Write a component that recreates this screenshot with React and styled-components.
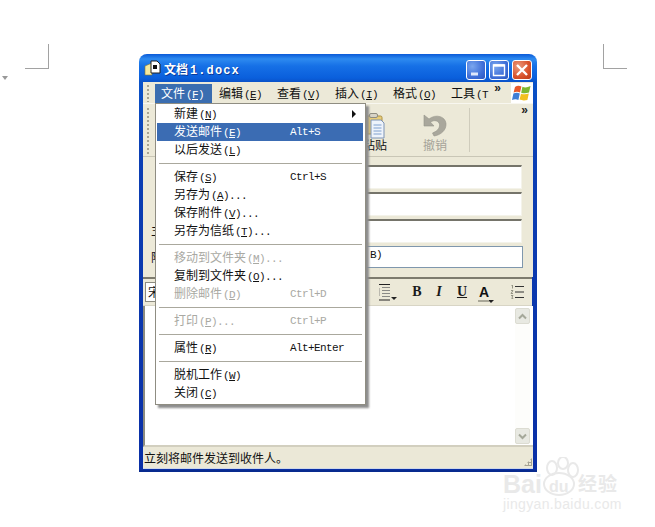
import React from "react";
import styled, { createGlobalStyle } from "styled-components";

const Global = createGlobalStyle`
  html, body { margin: 0; padding: 0; background: #fff; }
  body { font-family: "Noto Sans CJK SC", "Liberation Sans", sans-serif; font-size: 12px; color: #111; }
`;
const Page = styled.div`
  position: relative; width: 655px; height: 527px; overflow: hidden; padding: 54px 0 0 139px; box-sizing: border-box;
`;
const CropMark = styled.div`
  position: absolute; width: 23px; height: 24px; top: 44px; left: ${p => p.$left}px;
  border-bottom: 1px solid #a2a2a2;
  ${p => p.$side === "right" ? "border-right: 1px solid #a2a2a2;" : "border-left: 1px solid #a2a2a2;"}
`;
const PageMark = styled.div`
  position: absolute; left: 2px; top: 76px; width: 0; height: 0;
  border-left: 3px solid transparent; border-right: 3px solid transparent; border-top: 4px solid #999;
`;
const Window = styled.div`
  position: relative; width: 398px; height: 418px; box-sizing: border-box; padding: 0 4px 3px;
  display: flex; flex-direction: column; border-radius: 8px 8px 0 0;
  background: linear-gradient(180deg, #0a5ad8 0, #2d8af0 5px, #1670e6 12px, #0a5fdc 24px, #0a52c8 28px, #0b3fb4 100px, #0a2fa6 100%);
  box-shadow: inset 0 -2px 0 #082a8e;
`;
const TitleBar = styled.div`
  height: 28px; flex: none; display: flex; align-items: center; margin: 0 -1px; padding: 0 2px 0 2px;
`;
const TitleText = styled.span`
  margin-left: 2px; margin-top: 1px; color: #fff; font-size: 12px; font-weight: 700; text-shadow: 1px 1px 0 #0a3a9a;
`;
const TitleLatin = styled.span`
  font-family: "Liberation Mono", monospace; font-size: 12px; letter-spacing: 1.1px; margin-left: 2px;
`;
const WinButtons = styled.div`
  margin-left: auto; display: flex; gap: 3px; margin-top: 4px;
`;
const WinButton = styled.div`
  width: 20px; height: 20px; border: 1px solid #fff; border-radius: 3px; box-sizing: border-box;
  display: flex; align-items: center; justify-content: center;
  background: ${p => p.$close
    ? "radial-gradient(circle at 30% 30%, #ea9a7e, #d9512a 60%, #b83a18)"
    : "radial-gradient(circle at 30% 30%, #7aa6ee, #3f6fd8 60%, #2a55c0)"};
`;
const MenuBar = styled.div`
  height: 21px; flex: none; display: flex; align-items: flex-end; background: #ece9d8; position: relative;
  padding-left: 12px;
`;
const Gripper = styled.div`
  position: absolute; left: 4px; top: ${p => p.$top}px; bottom: ${p => p.$bottom}px; width: 2px;
  background: repeating-linear-gradient(180deg, #a7a493 0 2px, transparent 2px 4px);
`;
const MenuTitle = styled.div`
  width: ${p => p.$w || 58}px; margin-left: ${p => p.$ml || 0}px; height: 19px; box-sizing: border-box; padding-left: 6px; flex: none; white-space: nowrap;
  line-height: 18px; font-size: 12px;
  background: ${p => p.$active ? "#3a6db0" : "transparent"};
  color: ${p => p.$active ? "#fff" : "#111"};
`;
const Key = styled.span`
  font-family: "Liberation Mono", monospace; font-size: 11px; letter-spacing: -.6px; margin-left: 1px;
  u { text-underline-offset: 1px; }
`;
const Chevrons = styled.span`
  font-family: "Liberation Sans", sans-serif; font-weight: 700; font-size: 12px; line-height: 12px; color: #222;
  position: absolute; right: ${p => p.$right}px; top: ${p => p.$top}px;
`;
const Flag = styled.div`
  position: absolute; right: 0; top: 1px; width: 22px; height: 20px; background: #fff;
  display: flex; align-items: center; justify-content: center;
`;
const Toolbar = styled.div`
  height: 54px; flex: none; box-sizing: border-box; position: relative; display: flex;
  background: #ece9d8; border-top: 1px solid #f8f7f0; border-bottom: 1px solid #c9c6b6;
  padding-left: 202px;
`;
const ToolButton = styled.div`
  width: 60px; display: flex; flex-direction: column; align-items: center; padding-top: 9px; box-sizing: border-box;
  color: ${p => p.$disabled ? "#a5a398" : "#111"}; font-size: 12px;
`;
const ToolIcon = styled.div`
  height: 26px;
`;
const ToolLabel = styled.div`
  line-height: 14px; margin-top: -1px;
`;
const VSep = styled.div`
  width: 1px; margin: ${p => p.$m || "4px 0"}; background: #cfccbc; margin-left: ${p => p.$ml || 0}px; flex: none;
`;
const Fields = styled.div`
  height: 120px; flex: none; box-sizing: border-box; background: #ece9d8; padding: 8px 10px 0 8px;
  display: flex; flex-direction: column;
`;
const FieldRow = styled.div`
  display: flex; align-items: stretch; height: ${p => p.$h}px; margin-bottom: ${p => p.$mb}px; margin-right: ${p => p.$mr || 0}px;
`;
const FieldLabel = styled.div`
  width: 4px; flex: none; font-size: 12px; line-height: 22px; color: #111; margin-right: 4px; white-space: nowrap;
`;
const Sunken = styled.div`
  flex: 1; background: #fff; border-top: 2px solid #75746a; border-right: 1px solid #f4f3ea; border-bottom: 1px solid #f4f3ea;
`;
const Attach = styled.div`
  flex: 1; background: #fff; border: 1px solid #7f97ad; box-sizing: border-box; padding-left: 210px;
  font-family: "Liberation Mono", monospace; font-size: 11px; letter-spacing: -.6px; line-height: 16px;
`;
const FormatBar = styled.div`
  height: 29px; flex: none; box-sizing: border-box; background: #ece9d8; display: flex; align-items: center;
  border-top: 2px solid #7d7b6e; border-bottom: 1px solid #d8d5c5; padding-left: 2px; margin-right: 1px;
`;
const Combo = styled.div`
  width: 60px; height: 20px; background: #fff; border: 1px solid #8d8c80; box-sizing: border-box; font-size: 12px; line-height: 18px; padding-left: 2px; flex: none;
`;
const FormatGroup = styled.div`
  margin-left: 170px; display: flex; align-items: center; height: 100%;
`;
const FormatGlyph = styled.span`
  width: ${p => p.$w}px; flex: none; text-align: center; font-family: "Liberation Serif", serif; font-weight: 700;
  font-style: ${p => p.$italic ? "italic" : "normal"}; font-size: 14px; color: #1a1a1a; line-height: 16px;
  text-decoration: ${p => p.$underline ? "underline" : "none"};
`;
const FontColor = styled.span`
  position: relative; width: 14px; flex: none; text-align: center; font-family: "Liberation Sans", sans-serif; font-weight: 700; font-size: 14px; line-height: 14px;
  &::after { content: ""; position: absolute; left: 1px; bottom: -3px; width: 11px; height: 2px; background: #a9a798; }
`;
const Caret = styled.i`
  position: absolute; right: ${p => p.$r}px; bottom: ${p => p.$b}px; width: 0; height: 0;
  border-left: 3px solid transparent; border-right: 3px solid transparent; border-top: 3px solid #222;
`;
const IconSlot = styled.div`
  position: relative; width: ${p => p.$w}px; flex: none; display: flex; align-items: center; justify-content: center;
`;
const Body = styled.div`
  flex: 1; min-height: 0; background: #fff; display: flex; justify-content: flex-end;
  border-left: 2px solid #8c8b80; border-bottom: 2px solid #d2cfbf; padding: 2px 3px 1px 0; box-sizing: border-box;
`;
const Scroll = styled.div`
  width: 15px; display: flex; flex-direction: column; justify-content: space-between; background: #fdfdfb;
`;
const ScrollBtn = styled.div`
  width: 15px; height: 16px; box-sizing: border-box; border: 1px solid #dcdcd2; border-radius: 2px; background: #e8e9e2;
  display: flex; align-items: center; justify-content: center;
`;
const Status = styled.div`
  height: 22px; flex: none; position: relative; background: #ebe8d7; font-size: 12px; line-height: 22px; padding-left: 1px; color: #111;
  box-shadow: inset 0 -1px 0 #cfd8e8;
`;
const Grip = styled.div`
  position: absolute; right: 1px; bottom: 3px; width: 8px; height: 8px;
  background: radial-gradient(circle, #a5a294 1px, transparent 1.2px) 0 0 / 3px 3px;
  clip-path: polygon(100% 0, 100% 100%, 0 100%);
`;
const Menu = styled.div`
  position: absolute; left: 16px; top: 49px; width: 211px; box-sizing: border-box; background: #fff;
  border: 1px solid #8f8d82; padding: 1px 2px 2px 1px; box-shadow: 3px 3px 2px #8d8d8d; z-index: 5;
`;
const Row = styled.div`
  height: 18px; box-sizing: border-box; display: grid; grid-template-columns: 116px 1fr auto; align-items: center; padding: 0 0 2px 17px; line-height: 16px; white-space: nowrap;
  background: ${p => p.$selected ? "#3b6cb3" : "transparent"};
  color: ${p => p.$selected ? "#fff" : p.$disabled ? "#a9a9a3" : "#111"};
`;
const Ellipsis = styled.span`
  font-family: "Liberation Mono", monospace; font-size: 11px; letter-spacing: -.6px;
`;
const Shortcut = styled.span`
  font-family: "Liberation Mono", monospace; font-size: 11px; letter-spacing: -.6px;
`;
const Arrow = styled.i`
  margin-right: 7px; width: 0; height: 0; border-top: 4px solid transparent; border-bottom: 4px solid transparent; border-left: 4px solid #111;
`;
const Separator = styled.div`
  height: 1px; margin: 4px 1px 4px 2px; background: #aaa89d;
`;
const Watermark = styled.div`
  position: absolute; left: 503px; top: 457px; width: 120px; height: 56px; color: #e9e9e9;
`;
const WmBai = styled.span`
  position: absolute; left: 0; top: 13px; font-family: "Liberation Sans", sans-serif; font-weight: 700; font-size: 25px; line-height: 28px;
`;
const WmDu = styled.span`
  position: absolute; left: 46px; top: 21px; font-family: "Liberation Sans", sans-serif; font-weight: 700; font-size: 16px; line-height: 18px;
`;
const WmJing = styled.span`
  position: absolute; left: 75px; top: 15px; font-size: 19px; line-height: 22px; font-weight: 700; letter-spacing: 1px; white-space: nowrap;
`;
const WmUrl = styled.span`
  position: absolute; left: 0; top: 39px; font-family: "Liberation Sans", sans-serif; font-size: 14px; line-height: 16px; letter-spacing: .35px; white-space: nowrap;
`;
const WmPaw = styled.svg`
  position: absolute; left: 38px; top: 0;
`;

const K = ({ c }) => <Key>(<u>{c}</u>)</Key>;

const items = [
  { t: "新建", k: "N", arrow: true },
  { t: "发送邮件", k: "E", s: "Alt+S", selected: true },
  { t: "以后发送", k: "L" },
  "-",
  { t: "保存", k: "S", s: "Ctrl+S" },
  { t: "另存为", k: "A", dots: true },
  { t: "保存附件", k: "V", dots: true },
  { t: "另存为信纸", k: "T", dots: true },
  "-",
  { t: "移动到文件夹", k: "M", dots: true, disabled: true },
  { t: "复制到文件夹", k: "O", dots: true },
  { t: "删除邮件", k: "D", s: "Ctrl+D", disabled: true },
  "-",
  { t: "打印", k: "P", s: "Ctrl+P", dots: true, disabled: true },
  "-",
  { t: "属性", k: "R", s: "Alt+Enter" },
  "-",
  { t: "脱机工作", k: "W" },
  { t: "关闭", k: "C" },
];

const FileIcon = () => (
  <svg width="18" height="18" viewBox="0 0 18 18">
    <path d="M1 7 L8 4 L8 16 L1 16 Z" fill="#f5e9a0" stroke="#8a7a30" strokeWidth=".6" />
    <path d="M7 2 H13 L16 5 V14 H7 Z" fill="#fff" stroke="#222" strokeWidth="1" />
    <path d="M9 6 H13 V10 H9 Z" fill="#111" />
  </svg>
);
const WinFlag = () => (
  <svg width="20" height="20" viewBox="0 0 20 20">
    <path d="M3 4 Q6 2 9.4 3.5 L8 9.5 Q5 8 1.6 9.5 Z" fill="#e8592a" />
    <path d="M10.4 3.8 Q14 5.5 18.5 3 L17 9.5 Q13 11 9.2 9.7 Z" fill="#7cb82f" />
    <path d="M1.4 10.5 Q5 9 7.8 10.5 L6.4 17 Q3.5 15.5 0 17 Z" fill="#3f7ed6" />
    <path d="M9 10.8 Q13 12 16.8 10.5 L15.4 17 Q11 18 7.6 16.6 Z" fill="#f2c01e" />
  </svg>
);
const PasteIcon = () => (
  <svg width="24" height="26" viewBox="0 0 24 26">
    <rect x="2" y="3" width="17" height="18" rx="1.5" fill="#e9cd78" stroke="#a98f45" />
    <rect x="6.5" y="0.5" width="8" height="4" rx="1.5" fill="#d8d4c6" stroke="#8f8d80" />
    <path d="M8 7 H18 L21 10 V25 H8 Z" fill="#eef3fb" stroke="#7d93b5" />
    <path d="M10.5 12 H18.5 M10.5 15 H18.5 M10.5 18 H18.5 M10.5 21 H18.5" stroke="#7fa0cf" />
  </svg>
);
const UndoIcon = () => (
  <svg width="26" height="24" viewBox="0 0 26 24">
    <path d="M2 2 L2 13 L12 13 L8.5 9.2 C12 6.5 17 7.5 17.5 11.5 C18 15.5 14.5 18.5 10.5 20 L12 23 C19 22 24.5 17 24 10.5 C23.4 3.5 14 0.5 7 6 Z" fill="#a9a79c" stroke="#96948a" strokeWidth=".6" />
  </svg>
);
const IndentIcon = () => (
  <svg width="15" height="17" viewBox="0 0 15 17">
    <path d="M0 .5 H11 M0 16 H11" stroke="#222" strokeWidth="1.2" />
    <path d="M3 3.5 H11 M3 6.5 H11 M3 9.5 H11 M3 12.5 H11" stroke="#8a8a86" />
    <path d="M0 4 V12" stroke="#8a8a86" />
  </svg>
);
const NumberedIcon = () => (
  <svg width="14" height="14" viewBox="0 0 14 14">
    <path d="M5 1.5 H14 M5 7 H14 M5 12.5 H14" stroke="#333" />
    <path d="M1 0 H2.5 V3.5 M1 5.5 H3 L1 8.5 H3 M1 10.5 H3 L2 12 L3 14 H1" stroke="#8a8a7a" fill="none" strokeWidth=".9" />
  </svg>
);
const Chevron = ({ up }) => (
  <svg width="9" height="7" viewBox="0 0 9 7">
    <path d={up ? "M1 5.5 L4.5 2 L8 5.5" : "M1 1.5 L4.5 5 L8 1.5"} fill="none" stroke="#a5a89a" strokeWidth="2" />
  </svg>
);

export default function App() {
  return (
    <Page>
      <Global />
      <CropMark $left={25} $side="right" />
      <CropMark $left={603} $side="left" />
      <PageMark />
      <Window>
        <TitleBar>
          <FileIcon />
          <TitleText>文档<TitleLatin>1.docx</TitleLatin></TitleText>
          <WinButtons>
            <WinButton>
              <svg width="14" height="14" viewBox="0 0 14 14"><rect x="2" y="9.5" width="7" height="3" fill="#dfe8fb" /></svg>
            </WinButton>
            <WinButton>
              <svg width="14" height="14" viewBox="0 0 14 14"><path d="M1.5 2 H12.5 V12.5 H1.5 Z" fill="none" stroke="#fff" strokeWidth="1.4" /><path d="M1.5 2.5 H12.5" stroke="#fff" strokeWidth="2.4" /></svg>
            </WinButton>
            <WinButton $close>
              <svg width="14" height="14" viewBox="0 0 14 14"><path d="M2 2 L12 12 M12 2 L2 12" stroke="#fff" strokeWidth="2.4" /></svg>
            </WinButton>
          </WinButtons>
        </TitleBar>
        <MenuBar>
          <Gripper $top={3} $bottom={1} />
          <MenuTitle $active $w={57}>文件<K c="F" /></MenuTitle>
          <MenuTitle $ml={1}>编辑<K c="E" /></MenuTitle>
          <MenuTitle>查看<K c="V" /></MenuTitle>
          <MenuTitle>插入<K c="I" /></MenuTitle>
          <MenuTitle>格式<K c="O" /></MenuTitle>
          <MenuTitle $w={42}>工具<Key>(T</Key></MenuTitle>
          <Chevrons $right={32} $top={0}>»</Chevrons>
          <Flag><WinFlag /></Flag>
        </MenuBar>
        <Toolbar>
          <Gripper $top={4} $bottom={2} />
          <ToolButton>
            <ToolIcon><PasteIcon /></ToolIcon>
            <ToolLabel>粘贴</ToolLabel>
          </ToolButton>
          <ToolButton $disabled>
            <ToolIcon><UndoIcon /></ToolIcon>
            <ToolLabel>撤销</ToolLabel>
          </ToolButton>
          <VSep $ml={4} />
          <Chevrons $right={5} $top={0}>»</Chevrons>
        </Toolbar>
        <Fields>
          <FieldRow $h={24} $mb={3} $mr={1}><FieldLabel /><Sunken /></FieldRow>
          <FieldRow $h={24} $mb={3} $mr={1}><FieldLabel /><Sunken /></FieldRow>
          <FieldRow $h={24} $mb={3} $mr={1}><FieldLabel>主题</FieldLabel><Sunken /></FieldRow>
          <FieldRow $h={22} $mb={0}><FieldLabel>附件</FieldLabel><Attach>B)</Attach></FieldRow>
        </Fields>
        <FormatBar>
          <Combo>宋体</Combo>
          <FormatGroup>
            <IconSlot $w={22}><IndentIcon /><Caret $r={0} $b={1} /></IconSlot>
            <VSep $m="2px 0" $ml={5} />
            <FormatGlyph $w={28}>B</FormatGlyph>
            <FormatGlyph $w={16} $italic>I</FormatGlyph>
            <FormatGlyph $w={30} $underline>U</FormatGlyph>
            <FontColor>A<Caret $r={-3} $b={-4} /></FontColor>
            <VSep $m="2px 0" $ml={10} />
            <IconSlot $w={29}><NumberedIcon /></IconSlot>
          </FormatGroup>
        </FormatBar>
        <Body>
          <Scroll>
            <ScrollBtn><Chevron up /></ScrollBtn>
            <ScrollBtn><Chevron /></ScrollBtn>
          </Scroll>
        </Body>
        <Status>
          立刻将邮件发送到收件人。
          <Grip />
        </Status>
        <Menu>
          {items.map((it, i) =>
            it === "-" ? <Separator key={i} /> : (
              <Row key={i} $selected={it.selected} $disabled={it.disabled}>
                <span>{it.t}<K c={it.k} />{it.dots && <Ellipsis>...</Ellipsis>}</span>
                <Shortcut>{it.s || ""}</Shortcut>
                {it.arrow ? <Arrow /> : <span />}
              </Row>
            )
          )}
        </Menu>
      </Window>
      <Watermark>
        <WmBai>Bai</WmBai>
        <WmPaw width="44" height="40" viewBox="0 0 44 40">
          <g fill="none" stroke="#e9e9e9" strokeWidth="2">
            <ellipse cx="11" cy="11" rx="5" ry="7" />
            <ellipse cx="22" cy="6" rx="5" ry="6" />
            <ellipse cx="32" cy="13" rx="5" ry="7" />
            <ellipse cx="18" cy="27" rx="15" ry="11" />
          </g>
        </WmPaw>
        <WmDu>du</WmDu>
        <WmJing>经验</WmJing>
        <WmUrl>jingyan.baidu.com</WmUrl>
      </Watermark>
    </Page>
  );
}
